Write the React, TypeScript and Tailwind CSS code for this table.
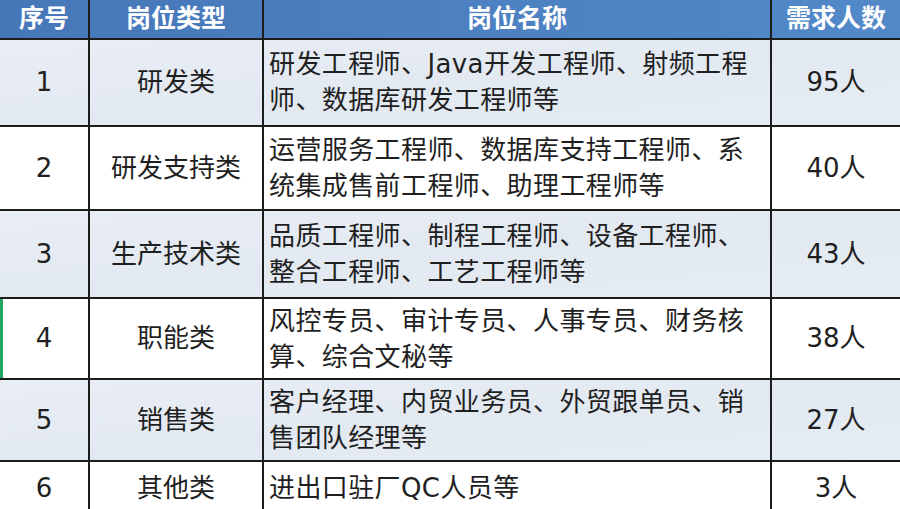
const rows = [
  { no: '1', type: '研发类', names: ['研发工程师、Java开发工程师、射频工程', '师、数据库研发工程师等'], count: '95人', h: 'h-[88px]', alt: true },
  { no: '2', type: '研发支持类', names: ['运营服务工程师、数据库支持工程师、系', '统集成售前工程师、助理工程师等'], count: '40人', h: 'h-[84px]', alt: false },
  { no: '3', type: '生产技术类', names: ['品质工程师、制程工程师、设备工程师、', '整合工程师、工艺工程师等'], count: '43人', h: 'h-[88px]', alt: true },
  { no: '4', type: '职能类', names: ['风控专员、审计专员、人事专员、财务核', '算、综合文秘等'], count: '38人', h: 'h-[81px]', alt: false, mark: true },
  { no: '5', type: '销售类', names: ['客户经理、内贸业务员、外贸跟单员、销', '售团队经理等'], count: '27人', h: 'h-[82px]', alt: true },
  { no: '6', type: '其他类', names: ['进出口驻厂QC人员等'], count: '3人', h: 'h-[54px]', alt: false },
];

const cell = 'flex items-center border-r-2 border-b-2 border-[#1c1c1c]';

export default function App() {
  return (
    <div className="w-[900px] h-[509px] overflow-hidden bg-white font-['DejaVu_Sans','Noto_Sans_CJK_SC',sans-serif] text-[#1f1f1f]">
      {/* 表头 */}
      <div className="grid grid-cols-[90px_174px_508px_128px] h-[39px] bg-gradient-to-r from-[#4677b8] via-[#4c80c1] to-[#5289c8] text-white font-bold text-[25px]">
        <div className={`${cell} justify-center`}>序号</div>
        <div className={`${cell} justify-center`}>岗位类型</div>
        <div className={`${cell} justify-center`}>岗位名称</div>
        <div className="flex items-center justify-center border-b-2 border-[#1c1c1c]">需求人数</div>
      </div>

      {rows.map((r) => (
        <div
          key={r.no}
          className={`grid grid-cols-[90px_174px_508px_128px] ${r.h} text-[26px] ${r.alt ? 'bg-gradient-to-br from-[#e9eef5] via-[#e3e9f1] to-[#e6ecf3]' : 'bg-white'}`}
        >
          <div className={`${cell} justify-center ${r.mark ? 'shadow-[inset_3px_0_0_#22a565]' : ''}`}>{r.no}</div>
          <div className={`${cell} justify-center`}>{r.type}</div>
          <div className={`${cell} pl-[5px] leading-[36px] tracking-[0.4px]`}>
            <div>
              {r.names.map((n) => (
                <div key={n} className="whitespace-nowrap">{n}</div>
              ))}
            </div>
          </div>
          <div className="flex items-center justify-center border-b-2 border-[#1c1c1c]">{r.count}</div>
        </div>
      ))}
    </div>
  );
}
